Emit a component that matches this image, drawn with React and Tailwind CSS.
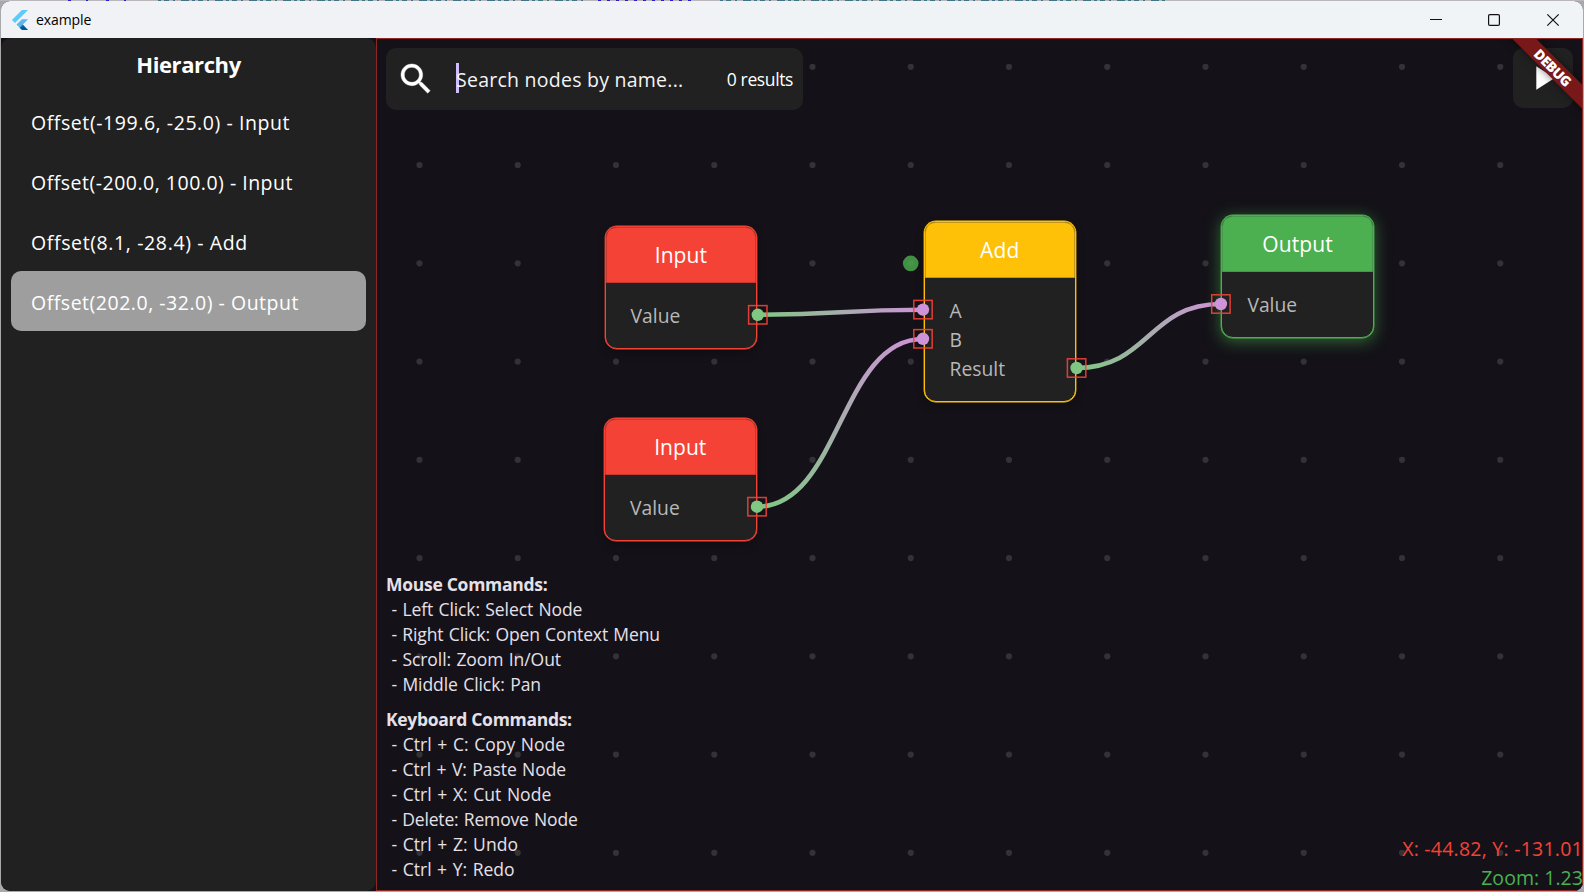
import React from "react";

const ORIGIN = { x: 376, y: 38 };

const hierarchy = [
  { label: "Offset(-199.6, -25.0) - Input", track: "tracking-[0.567px]" },
  { label: "Offset(-200.0, 100.0) - Input", track: "tracking-[0.5px]" },
  { label: "Offset(8.1, -28.4) - Add", track: "tracking-[0.62px]" },
  { label: "Offset(202.0, -32.0) - Output", track: "tracking-[0.517px]", selected: true },
];

const nodes = [
  {
    x: 604.6, y: 225.6, h: 123, title: "Input", titleTrack: "tracking-[0.05px]",
    border: "border-[#f44336]", header: "bg-[#f44336] border-[#c23a30]",
    shadow: "shadow-[0_0_0_0.4px_#f44336,0_4px_10px_rgba(0,0,0,0.3)]", ports: ["Value"],
  },
  {
    x: 604, y: 417.6, h: 123, title: "Input", titleTrack: "tracking-[0.05px]",
    border: "border-[#f44336]", header: "bg-[#f44336] border-[#c23a30]",
    shadow: "shadow-[0_0_0_0.4px_#f44336,0_4px_10px_rgba(0,0,0,0.3)]", ports: ["Value"],
  },
  {
    x: 923.6, y: 220.6, h: 181.4, title: "Add", titleTrack: "tracking-[0.187px]",
    border: "border-[#ffc107]", header: "bg-[#ffc107] border-[#c2961a]",
    shadow: "shadow-[0_0_0_0.4px_#ffc107,0_4px_10px_rgba(0,0,0,0.3)]", ports: ["A", "B", "Result"],
  },
  {
    x: 1221.4, y: 214.6, h: 123, title: "Output", titleTrack: "tracking-[0.115px]",
    border: "border-[#4caf50]", header: "bg-[#4caf50] border-[#45984a]",
    shadow: "shadow-[0_0_0_0.4px_#4caf50,0_3px_15px_1px_rgba(76,175,80,0.5)]", ports: ["Value"],
  },
];

const links = [
  [757.7, 314.7, 923, 309.7],
  [757, 506.7, 923, 339],
  [1076.5, 368, 1220.8, 304],
];

const ports = [
  [757.8, 314.8, "#81c784"],
  [757, 506.7, "#81c784"],
  [1076.6, 368, "#81c784"],
  [923, 309.6, "#ce93d8"],
  [923, 338.8, "#ce93d8"],
  [1220.9, 304, "#ce93d8"],
];

const mouse = [
  ["- Left Click: Select Node", "tracking-[-0.09px]"],
  ["- Right Click: Open Context Menu", "tracking-[-0.12px]"],
  ["- Scroll: Zoom In/Out", "tracking-[-0.07px]"],
  ["- Middle Click: Pan", "tracking-[-0.07px]"],
];

const keyboard = [
  ["- Ctrl + C: Copy Node", "tracking-[0.03px]"],
  ["- Ctrl + V: Paste Node", "tracking-[-0.07px]"],
  ["- Ctrl + X: Cut Node", "tracking-[0.03px]"],
  ["- Delete: Remove Node", "tracking-[-0.18px]"],
  ["- Ctrl + Z: Undo", "tracking-[0.03px]"],
  ["- Ctrl + Y: Redo", "tracking-[0.01px]"],
];

const gridDots = [];
for (let c = 0; c < 12; c++)
  for (let r = 0; r < 9; r++) gridDots.push([419.5 + c * 98.25, 66.8 + r * 98.25]);

function TitleBar() {
  return (
    <header className="flex h-[37px] shrink-0 items-center bg-linear-to-r from-[#f1f2f5] to-[#f0f4f6] pl-[9px]">
      <svg className="mt-px h-5 w-5" viewBox="0 0 24 24">
        <path d="M14.3 0 2.3 12 6 15.7 21.7 0z" fill="#5ccbfa" />
        <path d="M14.3 11.07 7.86 17.53l3.7 3.7 10.14-10.16z" fill="#5ab8ec" />
        <path d="m11.56 21.23 3.7-3.7L21.7 24h-7.4z" fill="#01579b" />
        <path d="m11.56 21.23 3.7-3.7 1.6 1.6z" fill="#1f7fc4" />
      </svg>
      <span className="ml-[6px] text-[14px] tracking-[-0.08px] text-black">example</span>
      <svg className="ml-auto mr-[18px] h-[18px] w-[142px]" viewBox="1423 10 142 18" fill="none" stroke="#111" strokeWidth="1.2">
        <path d="M1430 18.5h12" />
        <rect x="1488.6" y="13.6" width="10.8" height="10.8" rx="1.2" />
        <path d="m1547.3 13.3 11.4 11.4m0-11.4-11.4 11.4" />
      </svg>
    </header>
  );
}

function Sidebar() {
  return (
    <aside className="flex w-[375px] shrink-0 flex-col rounded-[10px] bg-[#212121] px-[10px] text-white">
      <h1 className="flex h-[53px] items-center justify-center text-[22px] font-bold tracking-[-0.4px]">Hierarchy</h1>
      <ul>
        {hierarchy.map((row) => (
          <li
            key={row.label}
            className={`flex h-[60px] items-center rounded-[10px] pt-[4px] pl-5 text-[19.5px] whitespace-nowrap text-white ${row.track} ${row.selected ? "bg-[#9e9e9e]" : ""}`}
          >
            {row.label}
          </li>
        ))}
      </ul>
    </aside>
  );
}

function Node({ node }) {
  return (
    <div
      className={`absolute w-[152.5px] overflow-hidden rounded-[12px] border bg-[#212121] ${node.border} ${node.shadow}`}
      style={{ left: node.x - ORIGIN.x, top: node.y - ORIGIN.y, height: node.h }}
    >
      <div className={`flex h-[56px] items-center justify-center rounded-t-[10px] border pt-[2px] text-[21px] text-white ${node.header} ${node.titleTrack}`}>
        {node.title}
      </div>
      <div className="pt-[18.5px] pl-[25px] text-[19.3px] leading-[29px] text-[#b8b8b8]">
        {node.ports.map((p) => (
          <div key={p}>{p}</div>
        ))}
      </div>
    </div>
  );
}

function Canvas() {
  return (
    <main className="relative flex grow flex-col justify-between overflow-hidden bg-[#141218]">
      <svg className="absolute inset-0 h-[853px] w-[1207px]" viewBox="376 38 1207 853" fill="none">
        <defs>
          {links.map(([x1, y1, x2, y2], i) => (
            <linearGradient key={i} id={`link${i}`} gradientUnits="userSpaceOnUse" x1={x1} y1={y1} x2={x2} y2={y2}>
              <stop offset="0" stopColor="#81c784" />
              <stop offset="1" stopColor="#ce93d8" />
            </linearGradient>
          ))}
        </defs>
        {gridDots.map(([x, y]) => (
          <circle key={`${x}-${y}`} cx={x} cy={y} r="3.1" fill="#333236" />
        ))}
        {links.map(([x1, y1, x2, y2], i) => {
          const mid = (x1 + x2) / 2;
          return <path key={i} d={`M${x1} ${y1}C${mid} ${y1} ${mid} ${y2} ${x2} ${y2}`} stroke={`url(#link${i})`} strokeWidth="4.6" />;
        })}
      </svg>

      {nodes.map((n) => (
        <Node key={`${n.x}-${n.y}`} node={n} />
      ))}

      <svg className="absolute inset-0 h-[853px] w-[1207px]" viewBox="376 38 1207 853" fill="none">
        <circle cx="910.7" cy="263.4" r="7.8" fill="#419144" />
        <circle cx="910.7" cy="263.4" r="3.1" fill="#479549" />
        {ports.map(([x, y, color]) => (
          <g key={`${x}-${y}`}>
            <circle cx={x} cy={y} r="6.2" fill={color} />
            <rect x={x - 9.2} y={y - 9.2} width="18.4" height="18.4" stroke="#f44336" strokeOpacity="0.9" strokeWidth="1.5" />
          </g>
        ))}
      </svg>

      <div className="relative flex items-start justify-between p-[10px]">
        <div className="flex h-[62px] w-[417px] items-center rounded-[10px] bg-[#212121] px-[10px] text-white">
          <svg className="h-10 w-10" viewBox="0 0 24 24" fill="#fff">
            <path stroke="#fff" strokeWidth="0.25" d="M15.5 14h-.79l-.28-.27C15.41 12.59 16 11.11 16 9.5 16 5.91 13.09 3 9.5 3S3 5.91 3 9.5 5.91 16 9.5 16c1.61 0 3.09-.59 4.23-1.57l.27.28v.79l5 4.99L20.49 19l-4.99-5zm-6 0C7.01 14 5 11.99 5 9.5S7.01 5 9.5 5 14 7.01 14 9.5 11.99 14 9.5 14z" />
          </svg>
          <div className="-mt-[2px] ml-5 h-[30px] w-[2.5px] bg-[#d0bcff]" />
          <span className="-ml-[2.5px] pt-[2px] text-[19.5px] tracking-[0.25px] whitespace-nowrap text-[#f4f4f4]">Search nodes by name...</span>
          <span className="ml-auto pt-px text-[17.5px] tracking-[-0.38px] whitespace-nowrap">0 results</span>
        </div>
        <div className="flex h-[60px] w-[60px] items-center justify-center rounded-[10px] bg-[#212121]">
          <svg className="h-10 w-10" viewBox="0 0 24 24" fill="#fff">
            <path d="M8 5v14l11-7z" />
          </svg>
        </div>
      </div>

      <div className="relative flex items-end justify-between">
        <div className="pb-[9px] pl-[10px] text-[17.5px] leading-[25px] text-[#e6e0e9]">
          <h2 className="font-bold tracking-[-0.28px]">Mouse Commands:</h2>
          {mouse.map(([t, track]) => (
            <p key={t} className={`pl-[5.5px] [word-spacing:0.9px] ${track}`}>{t}</p>
          ))}
          <h2 className="mt-[10px] font-bold tracking-[-0.3px]">Keyboard Commands:</h2>
          {keyboard.map(([t, track]) => (
            <p key={t} className={`pl-[5.5px] [word-spacing:1px] ${track}`}>{t}</p>
          ))}
        </div>
        <div className="-mb-px text-right text-[19.5px] leading-[29px]">
          <p className="tracking-[0.24px] text-[#f44336]">X: -44.82, Y: -131.01</p>
          <p className="tracking-[0.04px] text-[#4caf50]">Zoom: 1.23</p>
        </div>
      </div>

      <div className="absolute top-[21.4px] left-[1117px] flex h-[16.5px] w-[120px] rotate-45 items-center justify-center bg-[#781818] text-[14px] font-extrabold tracking-[-0.5px] text-white shadow-[0_0_9px_rgba(0,0,0,0.5)]">
        DEBUG
      </div>
      <div className="pointer-events-none absolute inset-0 border border-[#8c2823]" />
    </main>
  );
}

export default function App() {
  return (
    <div className="relative flex h-[892px] w-[1584px] flex-col overflow-hidden bg-[#a9a9ab] p-px font-['Open_Sans','Noto_Sans',sans-serif]">
      <svg className="absolute top-0 left-0 h-px w-[1584px]" viewBox="0 0 1584 1" preserveAspectRatio="none">
        <rect width="1584" height="1" fill="#b9b7ba" />
        <path d="M68 .5H135" stroke="#2a20c8" strokeDasharray="3 15 2 18" />
        <path d="M158 .5H585M720 .5H1165" stroke="#3f7585" strokeDasharray="3 3 5 4 2 6 8 3" />
        <path d="M598 .5H692" stroke="#2a20c8" strokeDasharray="3 6" />
      </svg>
      <div className="flex grow flex-col overflow-hidden rounded-[9px] bg-[#141218]">
        <TitleBar />
        <div className="flex grow">
          <Sidebar />
          <Canvas />
        </div>
      </div>
    </div>
  );
}
